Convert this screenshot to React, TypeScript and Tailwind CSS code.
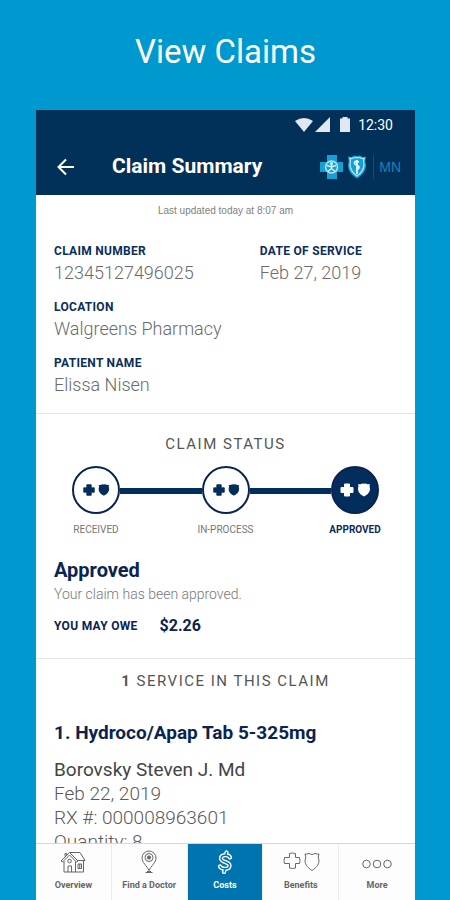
import React from 'react';
import clsx from 'clsx';

interface FieldProps {
  label: string;
  value: string;
  className?: string;
}

interface IconProps {
  className?: string;
}

const CROSS_PATH = 'M4.500 1h5v3.500H13v5H9.500V13h-5V9.500H1v-5h3.500z';
const SHIELD_PATH = 'M1 1.500q2 .8 3.500-.2 1.300-.8 2.500 0 1.200-.8 2.500 0Q11 2.300 13 1.500q-1 2 0 4.500c0 4-2.500 6-6 8-3.500-2-6-4-6-8q1-2.500 0-4.500z';

const CrossShieldIcon: React.FC<IconProps> = ({ className }) => (
  <svg viewBox="0 0 32 16" className={className} aria-hidden="true">
    <path d={CROSS_PATH} transform="translate(1 1)" stroke="currentColor" strokeWidth="1" strokeLinejoin="round" />
    <path d={SHIELD_PATH} transform="translate(18 .5)" />
  </svg>
);

const BrandLogo: React.FC = () => (
  <svg viewBox="0 0 50 26" className="h-[26px] w-[50px]" aria-hidden="true">
    <path d="M8 1h10v7h6v10h-6v7H8v-7H1V8h7z" fill="#12a0d7" />
    <circle cx="12.500" cy="13" r="6" fill="#12a0d7" stroke="#b9e2f3" strokeWidth="1.500" />
    <circle cx="12.500" cy="9.500" r="1.600" fill="#d5eef8" />
    <path d="M12.500 11v3.500M8 11.500l4.500 1.500 4.500-1.500M9 17.500l3.500-3 3.500 3" fill="none" stroke="#d5eef8" strokeWidth="1.500" />
    <path d="M29 2.500q3 1 5-.5 2-1 4 0 2-1 4 0 2 1.500 5 .5-1.500 4 0 8c0 7-4 11-9 14-5-3-9-7-9-14 1.500-4 0-8 0-8z" fill="#12a0d7" />
    <path d="M31 4.500q2 .5 4-.7 1.500-.8 3 .1 1.500-.9 3-.1 2 1.200 4 .7-1 3 0 6c0 6-3.500 9-7 11.500-3.500-2.500-7-5.500-7-11.500 1-3 0-6 0-6z" fill="#12a0d7" stroke="#b9e2f3" strokeWidth="1.300" />
    <path d="M38 6v14M40 8q-4.500-1.500-4.500 1c0 2.500 4.500 2 4.500 4s-2.500 2-2.500 4" fill="none" stroke="#e6f5fb" strokeWidth="1.800" />
  </svg>
);

const HouseIcon: React.FC = () => (
  <svg viewBox="0 0 26 24" className="h-6 w-[26px]" fill="none" stroke="currentColor" strokeWidth="1" strokeLinejoin="round" aria-hidden="true">
    <path d="M1 11 9.500 2.500 18 11l-1.500 1-7-7-7 7zM9.500 2.500H20l5 8H17.500" />
    <path d="M4 11v11h19.500V10.500M15.500 11.500V22M8 22v-6h3.500v6M5 6.500v-3h1.500V5" />
    <circle cx="9.500" cy="11" r="1.800" />
    <path d="M18 14h3.500v4.500H18zM19.750 14v4.500" />
  </svg>
);

const PinIcon: React.FC = () => (
  <svg viewBox="0 0 18 24" className="h-6 w-[18px]" fill="none" stroke="currentColor" strokeWidth="1" aria-hidden="true">
    <path d="M9 20.500C7 16 2 12.500 2 8a7 7 0 0 1 14 0c0 4.500-5 8-7 12.500z" />
    <circle cx="9" cy="7.500" r="4" />
    <circle cx="9" cy="7.500" r="1.600" fill="currentColor" />
    <path d="M5.500 22.500h7M7 21.500h4" />
  </svg>
);

const DollarIcon: React.FC = () => (
  <svg viewBox="0 0 18 24" className="h-6 w-[18px]" fill="none" strokeLinecap="round" strokeLinejoin="round" aria-hidden="true">
    <path d="M14 7.500C13 4.500 5 4 5 8.500c0 4 8.500 3 8.500 7 0 4.500-8 4-9.500 1M10.500 2.500 9.800 5M8.700 19.500 8 22" stroke="#ffffff" strokeWidth="4.200" />
    <path d="M14 7.500C13 4.500 5 4 5 8.500c0 4 8.500 3 8.500 7 0 4.500-8 4-9.500 1M10.500 2.500 9.800 5M8.700 19.500 8 22" stroke="#0074ae" strokeWidth="1.400" />
  </svg>
);

const BenefitsIcon: React.FC = () => (
  <svg viewBox="0 0 38 24" className="h-6 w-[38px]" fill="none" stroke="currentColor" strokeWidth="1" strokeLinejoin="round" aria-hidden="true">
    <path d="M7.500 3.500q3-1 6 0v4h4q1 3 0 6h-4v4.500q-3 1-6 0v-4.500h-5q-1-3 0-6h5z" />
    <path d="M23 4q2.500.5 4-.8 1.500 1.300 3 1.300t3-1.300Q34.500 4.500 37 4q-1.500 3 0 6.500c0 5-3.500 7.500-7 10-3.500-2.500-7-5-7-10q1.500-3.500 0-6.500z" />
  </svg>
);

const MoreIcon: React.FC = () => (
  <svg viewBox="0 0 32 24" className="h-6 w-8" fill="none" stroke="currentColor" strokeWidth="1" aria-hidden="true">
    <circle cx="5.500" cy="14" r="3.800" />
    <circle cx="16" cy="14" r="3.800" />
    <circle cx="26.500" cy="14" r="3.800" />
  </svg>
);

const steps = [
  { label: 'RECEIVED', current: false },
  { label: 'IN-PROCESS', current: false },
  { label: 'APPROVED', current: true }
];

const tabs = [
  { label: 'Overview', icon: <HouseIcon />, active: false },
  { label: 'Find a Doctor', icon: <PinIcon />, active: false },
  { label: 'Costs', icon: <DollarIcon />, active: true },
  { label: 'Benefits', icon: <BenefitsIcon />, active: false },
  { label: 'More', icon: <MoreIcon />, active: false }
];

const Field: React.FC<FieldProps> = ({ label, value, className }) => (
  <div className={className}>
    <dt className="text-xs leading-5 font-bold tracking-wide text-[#0b2d5b]">{label}</dt>
    <dd className="text-lg leading-6 font-light text-[#6b6b6b]">{value}</dd>
  </div>
);

const PhoneHeader: React.FC = () => (
  <header className="bg-[#013058] text-white">
    {/* Status bar */}
    <div className="flex h-[29px] items-center justify-end pr-[22px] text-sm">
      <svg viewBox="0 0 18 14" className="h-[14px] w-[18px]" fill="#e2e8f3" aria-hidden="true">
        <path d="M0 3q9-6 18 0L9 14z" />
      </svg>
      <svg viewBox="0 0 16 16" className="ml-[2px] h-4 w-4" fill="#e2e8f3" aria-hidden="true">
        <path d="M15 0v15H0z" />
      </svg>
      <svg viewBox="0 0 12 16" className="mr-[7px] ml-2 h-4 w-3" fill="#e2e8f3" aria-hidden="true">
        <path d="M3.500 0h5v1.500H11V15H1V1.500h2.500z" />
      </svg>
      <span>12:30</span>
    </div>

    {/* App bar */}
    <div className="flex h-14 items-center pr-[14px] pl-5">
      <button type="button" aria-label="Back" className="flex w-14 items-center">
        <svg viewBox="0 0 20 20" className="h-5 w-5" fill="none" stroke="#ffffff" strokeWidth="2" aria-hidden="true">
          <path d="M18 10H2.500M10 2.500 2.500 10l7.500 7.500" />
        </svg>
      </button>
      <h2 className="flex-1 text-[21px] font-bold">Claim Summary</h2>
      <BrandLogo />
      <span className="ml-1 border-l border-[#1d4a70] pl-[5px] font-['Liberation_Sans',sans-serif] text-sm leading-6 text-[#1583b8]">
        MN
      </span>
    </div>
  </header>
);

const StatusTracker: React.FC = () => (
  <ol className="mt-2 flex items-start px-9">
    {steps.map((step, index) => (
      <React.Fragment key={step.label}>
        {index > 0 && <li aria-hidden="true" className="mt-[22px] h-[6px] flex-1 bg-[#022d5c]" />}
        <li className="flex w-12 flex-col items-center">
          <span
            className={clsx(
              'flex h-12 w-12 items-center justify-center rounded-full border-2 border-[#0b2350]',
              step.current ? 'bg-[#022d5c] fill-white text-white' : 'bg-white fill-[#022d5c] text-[#022d5c]'
            )}
          >
            <CrossShieldIcon className={step.current ? 'h-4 w-8' : 'h-[14px] w-7'} />
          </span>
          <span
            className={clsx(
              'mt-2 text-[10px] leading-4 whitespace-nowrap',
              step.current ? 'font-bold text-[#0b2d5b]' : 'text-[#777777]'
            )}
          >
            {step.label}
          </span>
        </li>
      </React.Fragment>
    ))}
  </ol>
);

const TabBar: React.FC = () => (
  <nav className="grid h-[57px] shrink-0 grid-cols-5 divide-x divide-[#ececec] border-t border-[#d5d9db] bg-[#fdfdfd]">
    {tabs.map(tab => (
      <button
        key={tab.label}
        type="button"
        className={clsx(
          'flex flex-col items-center pt-[6px]',
          tab.active ? 'bg-[#0074ae] text-white' : 'text-[#666666]'
        )}
      >
        {tab.icon}
        <span className="mt-[3px] text-[9px] leading-4 font-bold whitespace-nowrap">{tab.label}</span>
      </button>
    ))}
  </nav>
);

export default function App() {
  return (
    <div className="flex h-screen flex-col bg-[#0099cf] pr-[35px] pl-9 font-['Roboto',sans-serif]">
      <h1 className="pt-7 pb-[34px] text-center text-[33px] leading-[48px] text-white">View Claims</h1>

      <div className="flex min-h-0 flex-1 flex-col bg-white">
        <PhoneHeader />

        <main className="min-h-0 flex-1 overflow-hidden">
          {/* Claim details */}
          <section className="border-b border-[#e4e4e4] px-[18px] pt-2 pb-4">
            <p className="text-center font-['Liberation_Sans',sans-serif] text-[10px] leading-4 text-[#808080]">
              Last updated today at 8:07 am
            </p>
            <dl className="mt-[22px] grid grid-cols-5 gap-y-3">
              <Field label="CLAIM NUMBER" value="12345127496025" className="col-span-3" />
              <Field label="DATE OF SERVICE" value="Feb 27, 2019" className="col-span-2" />
              <Field label="LOCATION" value="Walgreens Pharmacy" className="col-span-5" />
              <Field label="PATIENT NAME" value="Elissa Nisen" className="col-span-5" />
            </dl>
          </section>

          {/* Claim status */}
          <section className="border-b border-[#e4e4e4] pt-4 pb-5">
            <h3 className="text-center text-[15px] leading-7 tracking-widest text-[#555555]">CLAIM STATUS</h3>
            <StatusTracker />
            <div className="mt-4 px-[18px]">
              <h4 className="text-xl leading-8 font-bold text-[#0b2350]">Approved</h4>
              <p className="text-sm leading-4 font-light text-[#777777]">Your claim has been approved.</p>
              <p className="mt-3 flex items-center gap-[22px] leading-6 font-bold text-[#0b2350]">
                <span className="text-xs leading-6 tracking-wide">YOU MAY OWE</span>
                <span className="text-base leading-6">$2.26</span>
              </p>
            </div>
          </section>

          {/* Services */}
          <section className="pt-2">
            <h3 className="text-center text-[15px] leading-7 tracking-widest text-[#555555]">
              <b>1</b> SERVICE IN THIS CLAIM
            </h3>
            <div className="mt-6 px-[18px] text-[19px] leading-6 font-light text-[#5a5a5a]">
              <h4 className="mb-[11px] text-[19px] leading-7 font-bold text-[#0b2350]">
                1. Hydroco/Apap Tab 5-325mg
              </h4>
              <p className="font-normal text-[#444444]">Borovsky Steven J. Md</p>
              <p>Feb 22, 2019</p>
              <p>RX #: 000008963601</p>
              <p>Quantity: 8</p>
            </div>
          </section>
        </main>

        <TabBar />
      </div>
    </div>
  );
}
